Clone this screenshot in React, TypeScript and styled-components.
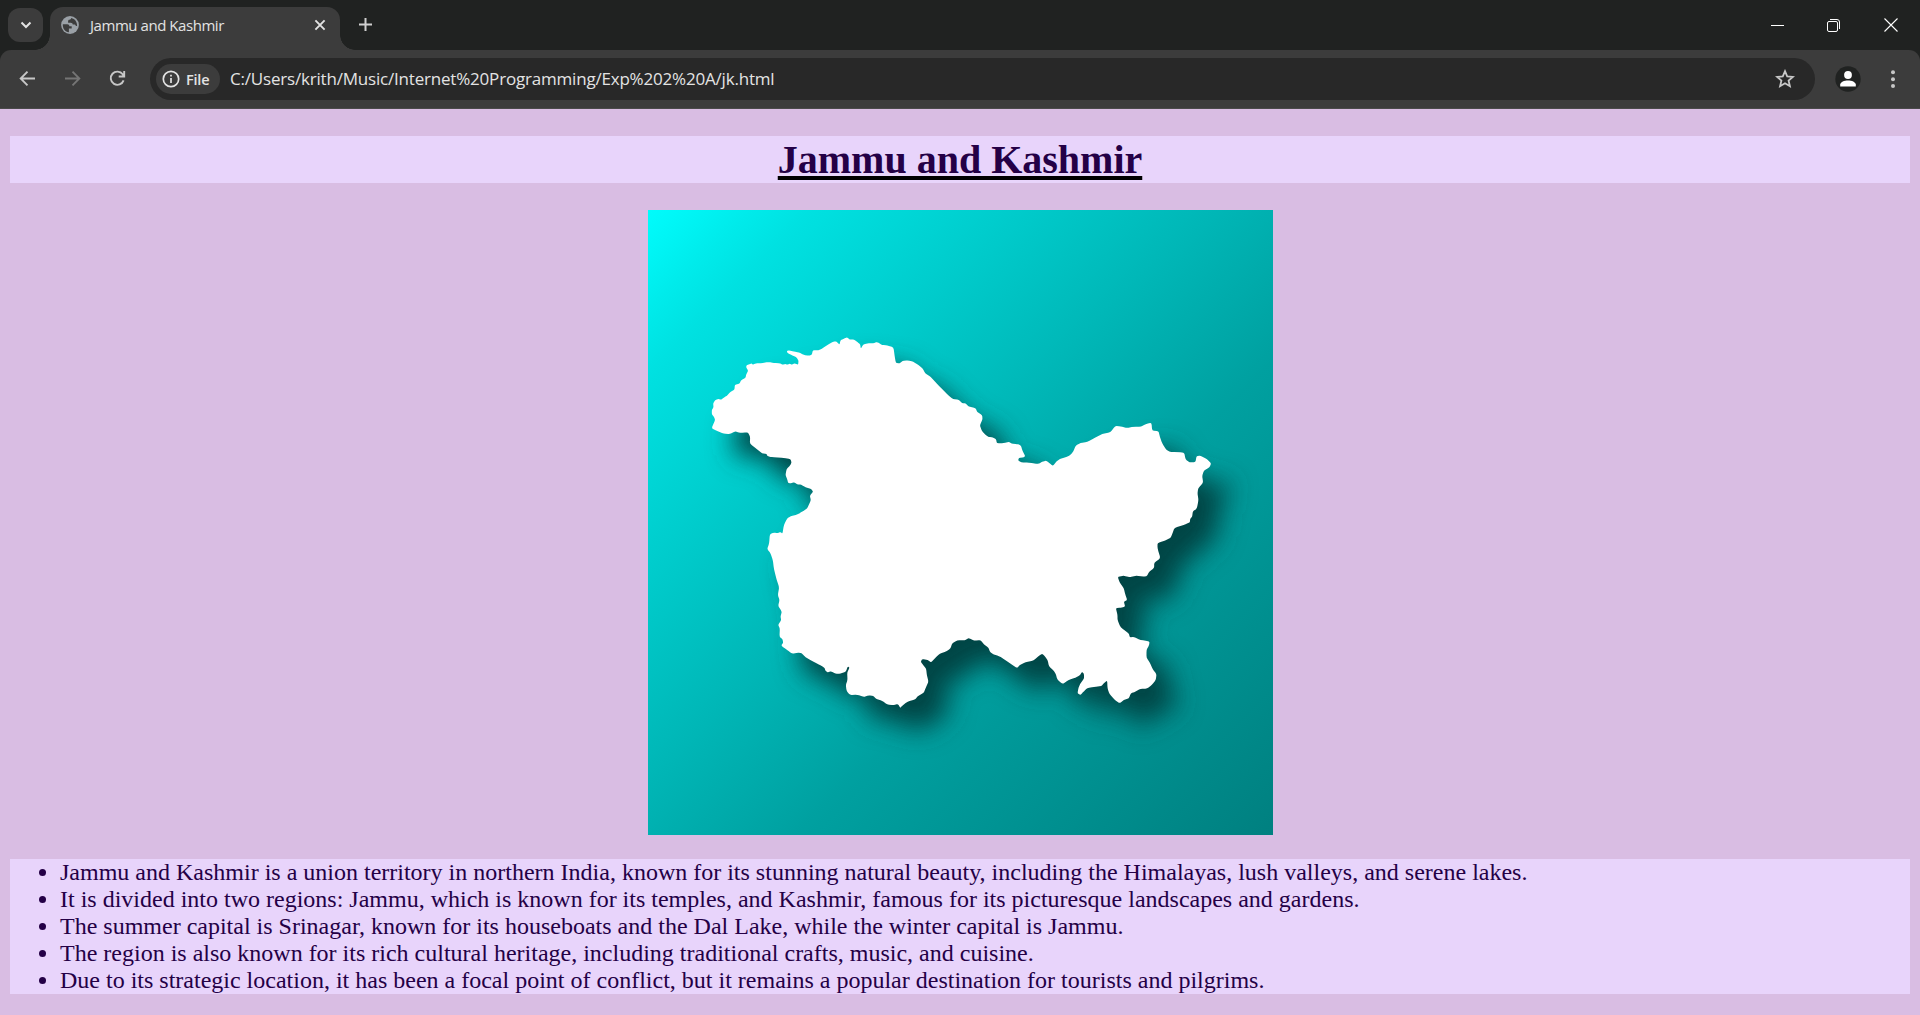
import React from "react";
import styled, { createGlobalStyle } from "styled-components";

const GlobalStyle = createGlobalStyle`
  html, body { margin: 0; padding: 0; background: #d9bde3; }
  *, *::before, *::after { box-sizing: border-box; }
`;

const Window = styled.div`
  width: 1920px;
  height: 1015px;
  display: flex;
  flex-direction: column;
  overflow: hidden;
  background: #202221;
  font-family: "Open Sans", "Noto Sans", sans-serif;
`;

const TabStrip = styled.div`
  height: 50px;
  flex: none;
  display: flex;
  align-items: flex-start;
  padding: 8px 0 0 8px;
`;

const TabSearch = styled.button`
  width: 35px;
  height: 34px;
  padding: 0;
  border: 0;
  border-radius: 12px;
  background: #3c3c3c;
  display: flex;
  align-items: center;
  justify-content: center;
`;

const Tab = styled.div`
  position: relative;
  width: 290px;
  height: 43px;
  margin: -1px 0 0 7px;
  padding: 0 13px 7px 11px;
  border-radius: 13px 13px 0 0;
  background: #3c3c3c;
  display: flex;
  align-items: center;

  &::before,
  &::after {
    content: "";
    position: absolute;
    bottom: 0;
    width: 15px;
    height: 15px;
  }
  &::before {
    left: -15px;
    background: radial-gradient(circle at 0 0, transparent 14.5px, #3c3c3c 15px);
  }
  &::after {
    right: -15px;
    background: radial-gradient(circle at 100% 0, transparent 14.5px, #3c3c3c 15px);
  }
`;

const TabTitle = styled.span`
  flex: 1;
  margin-left: 11px;
  color: #e3e3e3;
  font-size: 15px;
  line-height: 20px;
  letter-spacing: -0.45px;
  white-space: nowrap;
`;

const NewTab = styled.div`
  margin: 9px 0 0 18px;
  display: flex;
`;

const WindowControls = styled.div`
  margin-left: auto;
  display: flex;
`;

const WindowButton = styled.div<{ $inset?: number }>`
  width: 57px;
  height: 34px;
  padding-right: ${(p) => p.$inset ?? 0}px;
  display: flex;
  align-items: center;
  justify-content: center;
`;

const Toolbar = styled.div`
  height: 59px;
  flex: none;
  display: flex;
  align-items: center;
  padding: 0 15px 1px 17px;
  border-radius: 11px 11px 0 0;
  background: #3c3c3c;
  border-bottom: 1px solid #4a4a4a;
`;

const NavButton = styled.div`
  width: 21px;
  height: 21px;
  margin-right: 24px;
  display: flex;
`;

const Omnibox = styled.div`
  width: 1665px;
  height: 42px;
  margin: 1px 0 0 -2px;
  padding: 0 20px 0 6px;
  border-radius: 21px;
  background: #282828;
  display: flex;
  align-items: center;
`;

const FileChip = styled.div`
  width: 64px;
  height: 30px;
  padding-left: 6px;
  border-radius: 15px;
  background: #3c3c3c;
  display: flex;
  align-items: center;
`;

const ChipLabel = styled.span`
  margin-left: 6px;
  color: #e3e3e3;
  font-size: 14.5px;
  font-weight: 600;
  letter-spacing: -0.2px;
`;

const Address = styled.span`
  flex: 1;
  margin-left: 10px;
  color: #e3e3e3;
  font-size: 17px;
  line-height: 24px;
  letter-spacing: -0.195px;
  white-space: nowrap;
`;

const Avatar = styled.div`
  margin-left: 20px;
  display: flex;
`;

const Menu = styled.div`
  margin-left: auto;
  display: flex;
`;

const Page = styled.main`
  flex: 1;
  padding: 27px 10px 0;
  background: #d9bde3;
  font-family: "Liberation Serif", "Times New Roman", serif;
  color: #240046;
`;

const Heading = styled.h1`
  height: 47px;
  margin: 0 0 27px;
  background: #e8d4fb;
  font-size: 40px;
  line-height: 47px;
  font-weight: 700;
  text-align: center;
  text-decoration: underline #000 4px;
  text-underline-offset: 3px;
  text-decoration-skip-ink: none;
`;

const MapImage = styled.svg`
  display: block;
  width: 625px;
  height: 625px;
  margin: 0 auto 24px;
`;

const Facts = styled.ul`
  margin: 0;
  padding: 0 0 0 50px;
  background: #e8d4fb;
  font-size: 24px;
  line-height: 27px;
`;

const Fact = styled.li`
  white-space: nowrap;
`;

/* The border is digitised in pieces: each has its own origin and a grid of a third of a pixel. */
const BORDER: [number, number, string][] = [
  [690, 320, "63,325 74,300 70,290 64,283 64,270 69,262 68,250 74,240 84,237 92,239 101,232 108,228 120,216 132,209 133,194 147,191 152,180 165,174 167,164 173,152 167,142 168,136 183,130 187,134 196,130 210,130 235,126 250,129 270,130 275,134 285,132 290,134 298,131 304,134 312,130 323,134 324,122 318,112 306,106 291,99 289,93 296,91 310,95 325,97 340,105 355,107 364,104 367,91 384,91 396,85 412,74 430,64 438,65 447,74 450,61 460,56 470,52 478,59 490,58 502,67 509,73 511,86 518,74 530,70 548,70 560,66 575,75 590,76 609,82 612,105 616,129 627,130 636,123 652,121 668,125 685,136 697,146 704,160 720,170 745,197 775,228"],
  [900, 320, "158,237 175,239 185,250 195,250 205,260 218,262 226,266 230,276 245,285 246,298 238,316 244,332 255,345 265,351 277,352 287,358 289,370 310,370 325,365 333,371 350,372 361,376 366,392 374,408 370,412 355,414 353,421 362,427 385,428 415,432 425,425 437,422 445,428 457,438"],
  [1020, 400, "108,184 118,177 135,172 150,165 158,155 166,136 180,129 200,126 225,112 245,102 270,97 284,78 300,79 318,84 340,80 362,80 378,71 393,68 395,92 414,93 418,110 425,130 438,150 450,156 491,157 495,178 507,187 525,187 528,168 540,167 560,178 572,190 567,202 550,212 545,228 548,248 533,265 531,280 534,300 529,326 517,334 515,350 509,357 508,367 490,375 462,383 456,400 450,414 430,423 411,429 411,445 420,475 401,488 401,504 387,514 378,530 345,527 328,532 310,527 293,530"],
  [1040, 540, "233,115 238,128 250,145 254,162 260,180 250,185 254,200 240,203 226,204 231,225 231,240 240,262 265,280 268,292 280,291 300,300 327,304 326,315 318,330 318,353 328,368 337,388 348,402 346,420 335,434 320,446 300,446 285,455 271,460 265,475 250,480 237,490 222,479 207,462 201,445 200,421 190,430 183,438 160,441 140,444 130,454 120,465 111,460 114,443 120,430 131,415 130,400 124,396 118,406 105,413 85,420 66,432 50,418 46,402 40,393 25,378 22,362 14,350 5,341"],
  [900, 600, "412,170 400,181 375,187 358,195 350,204 335,195 315,180 295,168 278,163 268,155 264,143 250,133 240,120 222,122 204,114 193,121 170,121 155,130 150,145 138,154 118,161 105,173 92,187 82,180 65,177 61,185 66,193 77,206 79,225 84,245 75,265 70,278 50,290 45,298 20,305 0,322"],
  [740, 500, "480,624 472,612 460,615 440,614 425,602 408,597 398,588 385,586 370,591 350,584 328,585 318,572 316,555 321,540 320,518 327,503 322,499 316,515 300,521 285,521 272,514 262,517 255,513 252,503 235,493 215,483 195,472 183,459 172,458 155,461 140,450 122,437 128,428 126,418 117,410 118,385 113,375 122,360 120,350 124,335 113,318 117,300 112,285 116,262 108,238 100,205 97,180 90,160 80,147 86,130 88,102 100,98 112,99 120,96 126,101 130,75 140,55 150,49 172,43 180,38 190,32 200,25 207,10 211,0"],
  [690, 320, "358,527 368,515 362,507 345,502 332,494 320,493 312,487 300,490 293,489 290,478 285,465 288,448 300,435 303,427 300,417 280,414 255,412 240,411 231,408 228,402 215,400 200,388 178,371 179,350 172,337 160,338 145,338 135,334 118,342 100,341 80,333"],
];

/* Closed outline through all pieces, with corners only slightly rounded. */
const outline = (() => {
  const pts = BORDER.flatMap(([ox, oy, list]) =>
    list.split(" ").map((pair) => {
      const [x, y] = pair.split(",").map(Number);
      return [ox + x / 3, oy + y / 3];
    })
  );
  const toward = (a: number[], b: number[], t: number) =>
    `${(a[0] + (b[0] - a[0]) * t).toFixed(2)} ${(a[1] + (b[1] - a[1]) * t).toFixed(2)}`;
  return (
    pts
      .map((p, i) => {
        const prev = pts[(i + pts.length - 1) % pts.length];
        const next = pts[(i + 1) % pts.length];
        return `${i ? "L" : "M"}${toward(p, prev, 0.28)}Q${toward(p, p, 0)} ${toward(p, next, 0.28)}`;
      })
      .join("") + "Z"
  );
})();

const FACTS = [
  "Jammu and Kashmir is a union territory in northern India, known for its stunning natural beauty, including the Himalayas, lush valleys, and serene lakes.",
  "It is divided into two regions: Jammu, which is known for its temples, and Kashmir, famous for its picturesque landscapes and gardens.",
  "The summer capital is Srinagar, known for its houseboats and the Dal Lake, while the winter capital is Jammu.",
  "The region is also known for its rich cultural heritage, including traditional crafts, music, and cuisine.",
  "Due to its strategic location, it has been a focal point of conflict, but it remains a popular destination for tourists and pilgrims.",
];

function RegionMap() {
  return (
    <MapImage viewBox="647.5 210 625 625" role="img">
      <defs>
        <linearGradient id="sea" x1="0" y1="0" x2="1" y2="1">
          <stop offset="0" stopColor="#00fcfc" />
          <stop offset="0.04" stopColor="#00f4f4" />
          <stop offset="0.08" stopColor="#00ebeb" />
          <stop offset="0.13" stopColor="#00e1e1" />
          <stop offset="0.29" stopColor="#00cccc" />
          <stop offset="0.45" stopColor="#00b7b7" />
          <stop offset="0.62" stopColor="#00a0a0" />
          <stop offset="0.75" stopColor="#009595" />
          <stop offset="1" stopColor="#008080" />
        </linearGradient>
        <filter id="soft" x="-20%" y="-20%" width="140%" height="140%">
          <feGaussianBlur stdDeviation="13.5" />
        </filter>
      </defs>
      <rect x="647.5" y="210" width="625" height="625" fill="url(#sea)" />
      <path d={outline} transform="translate(21 24)" fill="#004444" filter="url(#soft)" />
      <path d={outline} fill="#fff" />
    </MapImage>
  );
}

export default function App() {
  return (
    <>
      <GlobalStyle />
      <Window>
        <TabStrip>
          <TabSearch>
            <svg width="12" height="8" viewBox="0 0 12 8" fill="none" stroke="#e3e3e3" strokeWidth="2">
              <path d="M1.500 1.500 6 6l4.500-4.500" />
            </svg>
          </TabSearch>
          <Tab>
            <svg width="18" height="18" viewBox="0 0 18 18">
              <circle cx="9" cy="9" r="8.900" fill="#9aa0a6" />
              <path
                d="M1.800 8.200h4.400c1.500 0 2.200.8 2.200 2h2.300v2.200H7.900v3.900C4.200 15.900 1.500 12.700 1.800 8.200ZM10.200 2.100c-.2 1.100-.8 1.700-1.700 1.700-1 0-1.400.6-1.400 1.600v1.300h2.600c1.300 0 2 .7 2 1.800h1.500c1 0 1.600.6 1.700 1.600h1.200C16.200 6 14 2.900 10.200 2.100Z"
                fill="#3c3c3c"
              />
            </svg>
            <TabTitle>Jammu and Kashmir</TabTitle>
            <svg width="14" height="14" viewBox="0 0 14 14" stroke="#e3e3e3" strokeWidth="1.900">
              <path d="m2.400 2.400 9.200 9.200m0-9.200-9.200 9.200" />
            </svg>
          </Tab>
          <NewTab>
            <svg width="15" height="15" viewBox="0 0 15 15" stroke="#d0d0d0" strokeWidth="2">
              <path d="M7.500 1v13M1 7.500h13" />
            </svg>
          </NewTab>
          <WindowControls>
            <WindowButton>
              <svg width="13" height="13" viewBox="0 0 13 13" fill="#fff">
                <rect y="6" width="13" height="1" />
              </svg>
            </WindowButton>
            <WindowButton $inset={2}>
              <svg width="13" height="13" viewBox="0 0 13 13" fill="none" stroke="#fff">
                <rect x=".5" y="2.500" width="10" height="10" rx="1.500" />
                <path d="M3 .5h7a2.500 2.500 0 0 1 2.500 2.500v7" />
              </svg>
            </WindowButton>
            <WindowButton $inset={1}>
              <svg width="14" height="14" viewBox="0 0 14 14" stroke="#fff" strokeWidth="1.100">
                <path d="m.5.5 13 13m0-13-13 13" />
              </svg>
            </WindowButton>
          </WindowControls>
        </TabStrip>
        <Toolbar>
          <NavButton>
            <svg width="21" height="21" viewBox="0 0 21 21" fill="none" stroke="#c7c7c7" strokeWidth="1.900">
              <path d="M18 10.500H4.500M10.500 3.700l-6.800 6.800 6.800 6.800" />
            </svg>
          </NavButton>
          <NavButton>
            <svg width="21" height="21" viewBox="0 0 21 21" fill="none" stroke="#757575" strokeWidth="1.900">
              <path d="M3 10.500h13.500M10.500 3.700l6.800 6.800-6.800 6.800" />
            </svg>
          </NavButton>
          <NavButton>
            <svg width="21" height="21" viewBox="0 0 21 21" fill="none" stroke="#c7c7c7" strokeWidth="1.900">
              <path d="M16.600 12.400a6.600 6.600 0 1 1-.9-6.100l1.500 1.900M17.200 3v5.500h-5.500" />
            </svg>
          </NavButton>
          <Omnibox>
            <FileChip>
              <svg width="18" height="18" viewBox="0 0 18 18" fill="none" stroke="#e3e3e3" strokeWidth="1.700">
                <circle cx="9" cy="9" r="7.700" />
                <path d="M9 8v5M9 4.800v1.800" />
              </svg>
              <ChipLabel>File</ChipLabel>
            </FileChip>
            <Address>C:/Users/krith/Music/Internet%20Programming/Exp%202%20A/jk.html</Address>
            <svg width="20" height="20" viewBox="0 0 20 20" fill="none" stroke="#c7c7c7" strokeWidth="1.800">
              <path d="m10 2.200 2.200 5.200 5.700.5-4.300 3.700 1.300 5.600-4.900-3-4.900 3 1.300-5.600-4.300-3.700 5.700-.5Z" />
            </svg>
          </Omnibox>
          <Avatar>
            <svg width="26" height="26" viewBox="0 0 26 26">
              <circle cx="13" cy="13" r="12.700" fill="#202221" />
              <circle cx="13" cy="9" r="3.900" fill="#fff" />
              <path d="M5.200 20.600v-2c0-2.700 4.200-4.200 7.800-4.200s7.800 1.500 7.800 4.200v2Z" fill="#fff" />
            </svg>
          </Avatar>
          <Menu>
            <svg width="24" height="20" viewBox="0 0 24 20" fill="#c7c7c7">
              <circle cx="12" cy="3.300" r="2" />
              <circle cx="12" cy="10.200" r="2" />
              <circle cx="12" cy="17.100" r="2" />
            </svg>
          </Menu>
        </Toolbar>
        <Page>
          <Heading>Jammu and Kashmir</Heading>
          <RegionMap />
          <Facts>
            {FACTS.map((fact) => (
              <Fact key={fact}>{fact}</Fact>
            ))}
          </Facts>
        </Page>
      </Window>
    </>
  );
}
